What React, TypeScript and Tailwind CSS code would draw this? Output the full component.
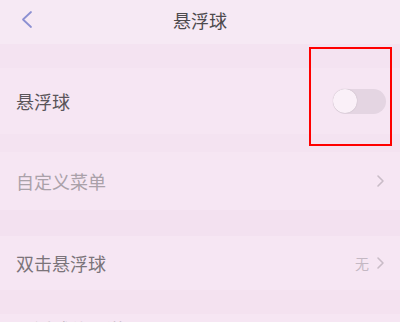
const font = { fontFamily: '"Noto Sans CJK SC", "Noto Sans", sans-serif' };

function Chevron() {
  return (
    <svg width="9" height="14" viewBox="0 0 9 14" fill="none">
      <path d="M2 2l5 5-5 5" stroke="#c9bcc7" strokeWidth="1.6" strokeLinecap="round" strokeLinejoin="round" />
    </svg>
  );
}

function Toggle() {
  return (
    <div className="w-[53px] h-[25px] rounded-full bg-[#e4d5e2] flex items-center">
      <div className="w-[24px] h-[24px] rounded-full bg-[#faf0f8] shadow-[0_0_1px_rgba(0,0,0,0.25)]" />
    </div>
  );
}

export default function App() {
  return (
    <div className="relative w-[400px] h-[322px] overflow-hidden bg-[#f6e6f3]" style={font}>
      {/* header */}
      <div className="h-[44px] flex items-center relative bg-[#f6e9f4]">
        <svg className="absolute left-[19px] top-[10px]" width="15" height="19" viewBox="0 0 15 19" fill="none">
          <path d="M12 2L4 9.5l8 7.5" stroke="#8c90d2" strokeWidth="1.8" strokeLinecap="round" strokeLinejoin="round" />
        </svg>
        <div className="w-full text-center text-[18px] leading-none text-[#4d4a4d] -mt-[4px]">悬浮球</div>
      </div>

      <div className="h-[24px] bg-[#f4e3f1]" />

      <div className="h-[66px] flex items-center justify-between pl-[16px] pr-[14px] bg-[#f6e6f3]">
        <span className="text-[18px] leading-none text-[#5a555a]">悬浮球</span>
        <Toggle />
      </div>

      <div className="h-[18px] bg-[#f4e3f1]" />

      <div className="h-[58px] flex items-center justify-between pl-[16px] pr-[15px] bg-[#f6e6f3]">
        <span className="text-[18px] leading-none text-[#aaa1a9]">自定义菜单</span>
        <Chevron />
      </div>

      <div className="h-[26px] bg-[#f3e1f0]" />

      <div className="h-[54px] flex items-center justify-between pl-[16px] pr-[15px] bg-[#f6e6f3]">
        <span className="text-[18px] leading-none text-[#7b747a]">双击悬浮球</span>
        <div className="flex items-center gap-[7px]">
          <span className="text-[14px] leading-none text-[#c4b8c3]">无</span>
          <Chevron />
        </div>
      </div>

      <div className="h-[24px] bg-[#f4e2f0]" />

      <div className="h-[50px] pl-[16px] pt-[4px] bg-[#f6e6f3]">
        <span className="text-[18px] leading-none text-[#b3aab2]">悬浮球使用说明</span>
      </div>

      {/* annotation box */}
      <div className="absolute left-[309px] top-[47px] w-[83px] h-[99px] border-2 border-[#ff0000]" />
    </div>
  );
}
